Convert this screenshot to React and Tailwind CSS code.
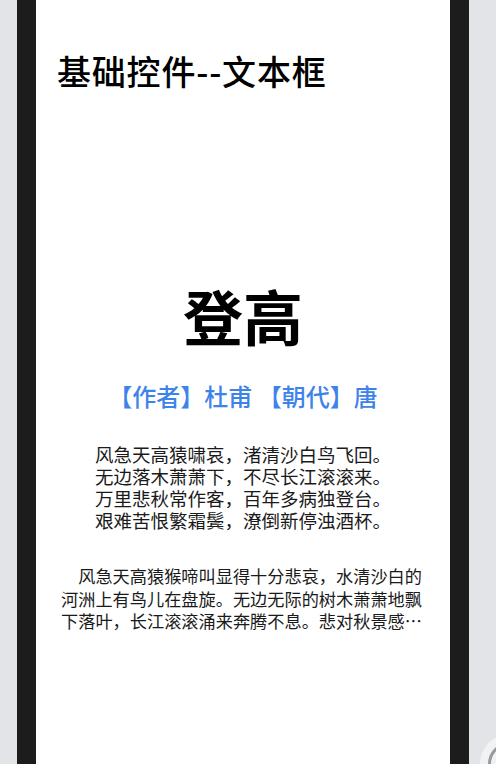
import React from 'react';

const poem = [
  '风急天高猿啸哀，渚清沙白鸟飞回。',
  '无边落木萧萧下，不尽长江滚滚来。',
  '万里悲秋常作客，百年多病独登台。',
  '艰难苦恨繁霜鬓，潦倒新停浊酒杯。',
];

const note =
  '风急天高猿猴啼叫显得十分悲哀，水清沙白的河洲上有鸟儿在盘旋。无边无际的树木萧萧地飘下落叶，长江滚滚涌来奔腾不息。悲对秋景感慨万千，长年漂泊他乡，如今又疾病缠身，独自一人登上高台。历尽了艰难苦恨白发长满了双鬓，衰颓满心偏又暂停了浇愁的酒杯。';

const App = () => {
  return (
    <div
      className="relative h-[764px] w-[496px] overflow-hidden bg-[#e3e4e8]"
      style={{ fontFamily: '"Noto Sans CJK SC", "Noto Sans", sans-serif' }}
    >
      <div className="ml-[17px] h-full w-[452px] bg-[#1c1c1c] px-[19px]">
        <div className="h-full bg-white px-[21px] pt-[50px]">
          <h1 className="text-[34px] leading-[42px] font-medium tracking-[0.8px] text-black">基础控件--文本框</h1>

          <h2 className="mt-[187px] text-center text-[60px] leading-[72px] font-bold text-black">登高</h2>

          <p className="mt-[30px] text-center text-[24px] leading-[30px] font-medium text-[#3d83ea]">
            【作者】杜甫 【朝代】唐
          </p>

          <div className="mt-[32px] text-center text-[18.5px] leading-[22px] text-[#1a1a1a]">
            {poem.map((line) => (
              <p key={line}>{line}</p>
            ))}
          </div>

          <p className="mx-[4px] mt-[34px] line-clamp-3 indent-[1em] text-[17.2px] leading-[22.5px] text-[#1a1a1a]">
            {note}
          </p>
        </div>
      </div>

      {/* floating button peeking in at bottom right */}
      <div className="absolute left-[480px] top-[734px] flex h-[60px] w-[60px] items-center justify-center rounded-full bg-[#f1f2f4]">
        <div className="h-[44px] w-[44px] rounded-full border-[3px] border-[#9a9a9a]" />
      </div>
    </div>
  );
};

export default App;
